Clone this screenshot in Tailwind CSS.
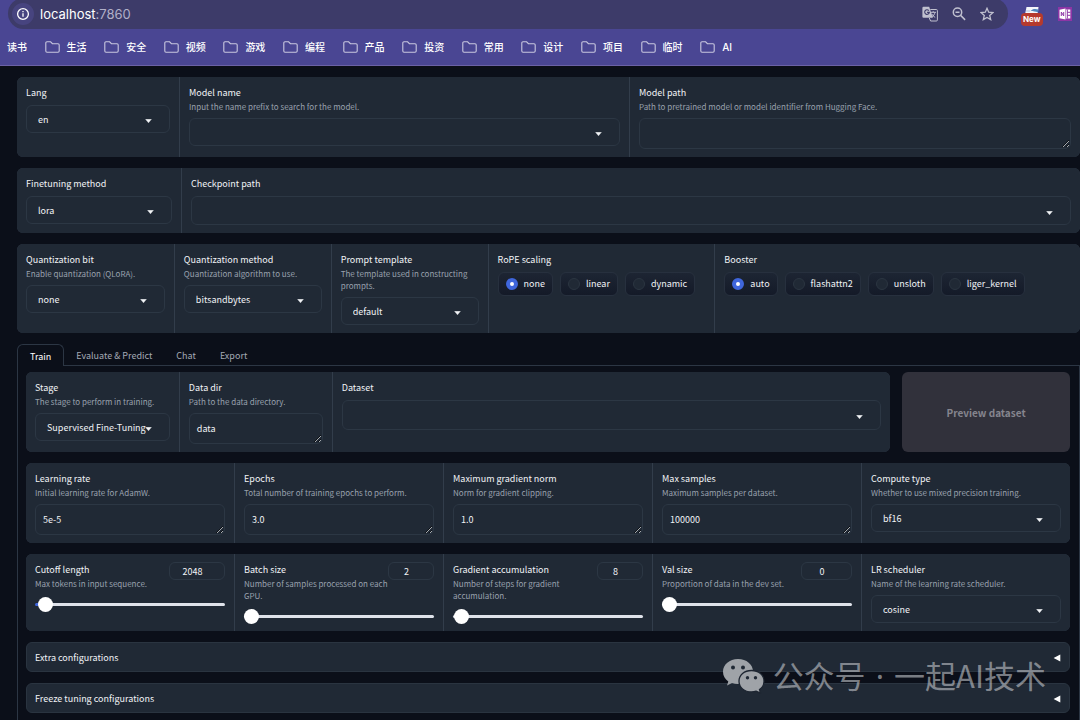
<!DOCTYPE html>
<html lang="en">
<head>
<meta charset="utf-8">
<meta name="viewport" content="width=device-width, initial-scale=1">
<title>LLaMA Board</title>
<script src="https://cdn.jsdelivr.net/npm/@tailwindcss/browser@4"></script>
</head>
<body class="relative h-screen overflow-hidden bg-[#0b0f19] font-['Noto_Sans_CJK_SC','Noto_Sans',sans-serif] text-[9px] text-[#f1f3f6] scheme-dark">

<!-- Icon shapes -->
<svg class="hidden" aria-hidden="true">
  <symbol id="folder" viewBox="0 0 15 12"><path d="M2 .8h3.6l1.8 1.9H13a1.2 1.2 0 0 1 1.2 1.2V10A1.2 1.2 0 0 1 13 11.200H2A1.200 1.200 0 0 1 .8 10V2A1.200 1.200 0 0 1 2 .8Z" fill="none" stroke="currentColor" stroke-width="1.100"/></symbol>
  <symbol id="caret" viewBox="0 0 7 4"><path d="M.6.3h5.800L3.500 3.800Z" fill="currentColor" stroke="currentColor" stroke-width=".4" stroke-linejoin="round"/></symbol>
  <symbol id="closed" viewBox="0 0 8 8"><path d="M7.300.6v6.800L.6 4Z" fill="currentColor"/></symbol>
</svg>

<header class="flex h-[66px] flex-col border-b border-[#6c62a6] bg-[#4a4693] font-['Inter','Noto_Sans_CJK_SC',sans-serif]">
  <div class="flex h-[29px] items-start">
    <div class="-mt-0.5 ml-2 flex h-[31px] w-[1000px] items-center rounded-full bg-[#3d3b69] pr-3.5 pl-1">
      <button class="flex size-[22px] items-center justify-center rounded-full bg-[#47447f] text-white" aria-label="Site information">
        <svg class="size-3.5" viewBox="0 0 14 14" fill="none" stroke="currentColor" stroke-width="1.300"><circle cx="7" cy="7" r="5.400"/><path d="M7 6.300v3.500M7 4v1.300"/></svg>
      </button>
      <a href="#" class="ml-1.5 flex-1 text-[13px] leading-4 text-[#b1b0c8]"><span class="text-white">localhost</span>:7860</a>
      <div class="flex items-center gap-[13px] text-[#c0c0cf]">
        <button aria-label="Translate"><svg class="h-4 w-4" viewBox="0 0 16 16"><path d="M1.500.800h5.700l3.600 11H1.500A1.100 1.100 0 0 1 .4 10.700V1.900A1.100 1.100 0 0 1 1.500.8Z" fill="currentColor"/><path d="M8.300 3.500h6A1.100 1.100 0 0 1 15.400 4.600v9.300a1.100 1.100 0 0 1-1.100 1.100H8.600L7.300 12M8.800 6.300H14M11.200 5.200v1.100M13 6.300c-.4 2-1.700 3.800-3.200 5M9.700 7.900c.8 1.600 2 2.700 3.500 3.500" fill="none" stroke="currentColor"/><path d="M6.800 4.600A2.300 2.300 0 1 0 7.300 6.400H5.100" fill="none" stroke="#3d3b69" stroke-width="1.100"/></svg></button>
        <button aria-label="Zoom out"><svg class="size-4" viewBox="0 0 16 16" fill="none" stroke="currentColor" stroke-width="1.500"><circle cx="6.500" cy="6.300" r="4.200"/><path d="m9.600 9.400 4.500 4.500M4.500 6.300h4"/></svg></button>
        <button aria-label="Bookmark"><svg class="size-[14px]" viewBox="0 0 14 14" fill="none" stroke="currentColor" stroke-width="1.300"><path d="m7 1.300 1.700 3.900 4.200.4-3.200 2.800 1 4.200L7 10.400l-3.700 2.200 1-4.200L1.100 5.600l4.200-.4Z"/></svg></button>
      </div>
    </div>
    <div class="ml-[13px] flex items-start gap-[15px] pt-[7px]">
      <button class="flex flex-col items-center" aria-label="New extension">
        <svg class="h-1.5 w-3.5" viewBox="0 0 14 6"><path d="M1.500 0h12l-.7 6H.3Z" fill="#f4f6fa"/><path d="M5.500 4c2-2.500 5-2.500 8-1.500l-.5 3c-2-1.500-5-.5-7.500-1.500Z" fill="#4f86bd"/><path d="M1 3.500h4v1H1Z" fill="#a9bfe0"/></svg>
        <span class="rounded-sm bg-[#b53a2e] px-0.5 text-[8px] leading-[13px] font-bold text-white">New</span>
      </button>
      <button aria-label="Notes clipper"><svg class="size-3.5" viewBox="0 0 14 14"><path d="M0 0h14v14H0Z" fill="#8d35a5"/><path d="m1.500 2.800 6-1.300v11l-6-1.300ZM8 2.500h4.300v9H8Z" fill="#fff"/><path d="M3.300 9V5l2.400 4V5M9.300 2.500v9M9.300 5.300h3M9.300 8.300h3" fill="none" stroke="#8d35a5"/></svg></button>
    </div>
  </div>
  <nav aria-label="Bookmarks" class="flex w-[732px] flex-1 items-center justify-between pl-[7px] text-[10px] font-medium text-white [&_a]:flex [&_a]:items-center [&_a]:gap-[7px] [&_svg]:h-3 [&_svg]:w-[15px] [&_svg]:text-[#c9c8df]">
    <a href="#">读书</a>
    <a href="#"><svg><use href="#folder"/></svg>生活</a>
    <a href="#"><svg><use href="#folder"/></svg>安全</a>
    <a href="#"><svg><use href="#folder"/></svg>视频</a>
    <a href="#"><svg><use href="#folder"/></svg>游戏</a>
    <a href="#"><svg><use href="#folder"/></svg>编程</a>
    <a href="#"><svg><use href="#folder"/></svg>产品</a>
    <a href="#"><svg><use href="#folder"/></svg>投资</a>
    <a href="#"><svg><use href="#folder"/></svg>常用</a>
    <a href="#"><svg><use href="#folder"/></svg>设计</a>
    <a href="#"><svg><use href="#folder"/></svg>项目</a>
    <a href="#"><svg><use href="#folder"/></svg>临时</a>
    <a href="#"><svg><use href="#folder"/></svg>AI</a>
  </nav>
</header>

<main class="flex flex-col gap-[11px] pt-[11px] pl-[17px]
  [&_.row]:grid [&_.row]:gap-px [&_.row]:overflow-hidden [&_.row]:rounded-md [&_.row]:bg-[#323d4b]
  [&_.cell]:bg-[#202935] [&_.cell]:px-[9px] [&_.cell]:py-2
  [&_.name]:block [&_.name]:pt-0.5 [&_.name]:leading-3
  [&_.info]:mt-0.5 [&_.info]:text-[8px] [&_.info]:leading-3 [&_.info]:text-[#99a1ae]
  [&_.pick]:relative [&_.pick]:mt-[5px] [&_.name+.pick]:mt-1.5
  [&_.pick>select]:block [&_.pick>select]:h-7 [&_.pick>select]:w-full [&_.pick>select]:appearance-none [&_.pick>select]:rounded-md [&_.pick>select]:border [&_.pick>select]:border-[#2c3744] [&_.pick>select]:bg-[#202935] [&_.pick>select]:pt-0.5 [&_.pick>select]:pl-[11px]
  [&_.pick>svg]:pointer-events-none [&_.pick>svg]:absolute [&_.pick>svg]:top-1/2 [&_.pick>svg]:right-[18px] [&_.pick>svg]:h-1 [&_.pick>svg]:w-[7px]
  [&_textarea]:mt-[5px] [&_textarea]:block [&_textarea]:h-[31px] [&_textarea]:w-full [&_textarea]:overflow-hidden [&_textarea]:rounded-md [&_textarea]:border [&_textarea]:border-[#2c3744] [&_textarea]:px-[7px] [&_textarea]:pt-2 [&_textarea]:leading-[14px]">

  <section class="row grid-cols-[162fr_449fr_450fr]">
    <div class="cell">
      <label class="name" for="lang">Lang</label>
      <div class="pick"><select id="lang"><option>en</option></select><svg><use href="#caret"/></svg></div>
    </div>
    <div class="cell">
      <label class="name" for="model">Model name</label>
      <p class="info">Input the name prefix to search for the model.</p>
      <div class="pick"><select id="model"><option></option></select><svg><use href="#caret"/></svg></div>
    </div>
    <div class="cell">
      <label class="name" for="path">Model path</label>
      <p class="info">Path to pretrained model or model identifier from Hugging Face.</p>
      <textarea id="path" rows="1"></textarea>
    </div>
  </section>

  <section class="row grid-cols-[164fr_898fr]">
    <div class="cell">
      <label class="name" for="method">Finetuning method</label>
      <div class="pick"><select id="method"><option>lora</option></select><svg><use href="#caret"/></svg></div>
    </div>
    <div class="cell">
      <label class="name" for="ckpt">Checkpoint path</label>
      <div class="pick"><select id="ckpt" class="min-h-[29px]"><option></option></select><svg><use href="#caret"/></svg></div>
    </div>
  </section>

  <section class="row grid-cols-[157fr_156fr_156fr_226fr_365fr] [&_.pills]:flex [&_.pills]:gap-[7px] [&_.pills]:pt-1.5
    [&_.pills>label]:flex [&_.pills>label]:h-6 [&_.pills>label]:items-center [&_.pills>label]:gap-1.5 [&_.pills>label]:rounded-md [&_.pills>label]:border [&_.pills>label]:border-[#27303e] [&_.pills>label]:bg-linear-to-b [&_.pills>label]:from-[#1d2533] [&_.pills>label]:to-[#141a28] [&_.pills>label]:px-[7px]
    [&_input]:size-3 [&_input]:appearance-none [&_input]:rounded-full [&_input]:border [&_input]:border-[#2b3541] [&_input]:bg-[#202935] [&_input:checked]:border-4 [&_input:checked]:border-[#3f66dc] [&_input:checked]:bg-white">
    <div class="cell">
      <label class="name" for="qbit">Quantization bit</label>
      <p class="info">Enable quantization (QLoRA).</p>
      <div class="pick"><select id="qbit"><option>none</option></select><svg><use href="#caret"/></svg></div>
    </div>
    <div class="cell">
      <label class="name" for="qmethod">Quantization method</label>
      <p class="info">Quantization algorithm to use.</p>
      <div class="pick"><select id="qmethod"><option>bitsandbytes</option></select><svg><use href="#caret"/></svg></div>
    </div>
    <div class="cell">
      <label class="name" for="template">Prompt template</label>
      <p class="info">The template used in constructing prompts.</p>
      <div class="pick"><select id="template"><option>default</option></select><svg><use href="#caret"/></svg></div>
    </div>
    <fieldset class="cell min-w-0">
      <legend class="name float-left w-full">RoPE scaling</legend>
      <div class="pills clear-both">
        <label><input type="radio" name="rope" checked>none</label>
        <label><input type="radio" name="rope">linear</label>
        <label><input type="radio" name="rope">dynamic</label>
      </div>
    </fieldset>
    <fieldset class="cell min-w-0">
      <legend class="name float-left w-full">Booster</legend>
      <div class="pills clear-both">
        <label><input type="radio" name="booster" checked>auto</label>
        <label><input type="radio" name="booster">flashattn2</label>
        <label><input type="radio" name="booster">unsloth</label>
        <label><input type="radio" name="booster">liger_kernel</label>
      </div>
    </fieldset>
  </section>

  <div>
    <div role="tablist" class="relative z-10 -mb-px flex h-[22px] text-[#a3a9b4] [&>button]:px-3 [&>button]:pt-0.5">
      <button role="tab" aria-selected="true" class="rounded-t-md border border-b-0 border-[#2c3644] bg-[#0b0f19] text-white">Train</button>
      <button role="tab">Evaluate &amp; Predict</button>
      <button role="tab">Chat</button>
      <button role="tab">Export</button>
    </div>

    <div role="tabpanel" class="flex flex-col gap-[11px] border border-[#2c3644] pt-1.5 pr-[9px] pb-10 pl-2">
      <div class="grid grid-cols-[865fr_168fr] gap-3">
        <section class="row grid-cols-[153fr_152fr_558fr]">
          <div class="cell">
            <label class="name" for="stage">Stage</label>
            <p class="info">The stage to perform in training.</p>
            <div class="pick"><select id="stage"><option>Supervised Fine-Tuning</option></select><svg><use href="#caret"/></svg></div>
          </div>
          <div class="cell">
            <label class="name" for="dir">Data dir</label>
            <p class="info">Path to the data directory.</p>
            <textarea id="dir" rows="1">data</textarea>
          </div>
          <div class="cell">
            <label class="name" for="dataset">Dataset</label>
            <div class="pick"><select id="dataset" class="min-h-[30px]"><option></option></select><svg><use href="#caret"/></svg></div>
          </div>
        </section>
        <button disabled class="rounded-md bg-[#31313b] text-[10px] font-bold text-[#85858e]">Preview dataset</button>
      </div>

      <section class="row grid-cols-5">
        <div class="cell">
          <label class="name" for="lr">Learning rate</label>
          <p class="info">Initial learning rate for AdamW.</p>
          <textarea id="lr" rows="1">5e-5</textarea>
        </div>
        <div class="cell">
          <label class="name" for="epochs">Epochs</label>
          <p class="info">Total number of training epochs to perform.</p>
          <textarea id="epochs" rows="1">3.0</textarea>
        </div>
        <div class="cell">
          <label class="name" for="norm">Maximum gradient norm</label>
          <p class="info">Norm for gradient clipping.</p>
          <textarea id="norm" rows="1">1.0</textarea>
        </div>
        <div class="cell">
          <label class="name" for="samples">Max samples</label>
          <p class="info">Maximum samples per dataset.</p>
          <textarea id="samples" rows="1">100000</textarea>
        </div>
        <div class="cell">
          <label class="name" for="compute">Compute type</label>
          <p class="info">Whether to use mixed precision training.</p>
          <div class="pick"><select id="compute"><option>bf16</option></select><svg><use href="#caret"/></svg></div>
        </div>
      </section>

      <section class="row grid-cols-5 [&_.head]:flex [&_.head]:items-start [&_.head]:justify-between
        [&_[type=number]]:h-[18px] [&_[type=number]]:shrink-0 [&_[type=number]]:rounded-md [&_[type=number]]:border [&_[type=number]]:border-[#2c3744] [&_[type=number]]:pl-1.5 [&_[type=number]]:text-center
        [&_[type=range]]:mt-[7px] [&_[type=range]]:block [&_[type=range]]:h-3.5 [&_[type=range]]:w-full [&_[type=range]]:appearance-none [&_[type=range]]:bg-transparent
        [&_::-webkit-slider-runnable-track]:h-[3px] [&_::-webkit-slider-runnable-track]:rounded-full [&_::-webkit-slider-runnable-track]:bg-[#dfe2ea]
        [&_::-webkit-slider-thumb]:-mt-1.5 [&_::-webkit-slider-thumb]:size-[15px] [&_::-webkit-slider-thumb]:appearance-none [&_::-webkit-slider-thumb]:rounded-full [&_::-webkit-slider-thumb]:bg-white">
        <div class="cell">
          <div class="head">
            <div><label class="name" for="cutoff">Cutoff length</label><p class="info">Max tokens in input sequence.</p></div>
            <input type="number" class="w-14" value="2048" aria-label="Cutoff length value">
          </div>
          <input id="cutoff" type="range" min="4" max="131072" value="2048" class="[&::-webkit-slider-runnable-track]:bg-linear-to-r [&::-webkit-slider-runnable-track]:from-[#3f66dc] [&::-webkit-slider-runnable-track]:from-2% [&::-webkit-slider-runnable-track]:to-[#dfe2ea] [&::-webkit-slider-runnable-track]:to-2%">
        </div>
        <div class="cell">
          <div class="head">
            <div><label class="name" for="batch">Batch size</label><p class="info">Number of samples processed on each GPU.</p></div>
            <input type="number" class="w-[46px]" value="2" aria-label="Batch size value">
          </div>
          <input id="batch" type="range" min="1" max="1024" value="2">
        </div>
        <div class="cell">
          <div class="head">
            <div><label class="name" for="accum">Gradient accumulation</label><p class="info">Number of steps for gradient accumulation.</p></div>
            <input type="number" class="w-[46px]" value="8" aria-label="Gradient accumulation value">
          </div>
          <input id="accum" type="range" min="1" max="1024" value="8">
        </div>
        <div class="cell">
          <div class="head">
            <div><label class="name" for="val">Val size</label><p class="info">Proportion of data in the dev set.</p></div>
            <input type="number" class="w-[51px]" value="0" aria-label="Val size value">
          </div>
          <input id="val" type="range" min="0" max="1" step="0.001" value="0">
        </div>
        <div class="cell">
          <label class="name" for="sched">LR scheduler</label>
          <p class="info">Name of the learning rate scheduler.</p>
          <div class="pick"><select id="sched"><option>cosine</option></select><svg><use href="#caret"/></svg></div>
        </div>
      </section>

      <button aria-expanded="false" class="flex h-[30px] items-center justify-between rounded-md border border-[#2a3440] bg-[#202935] px-2 pt-px">Extra configurations<svg class="size-2 text-white"><use href="#closed"/></svg></button>
      <button aria-expanded="false" class="flex h-[30px] items-center justify-between rounded-md border border-[#2a3440] bg-[#202935] px-2 pt-px">Freeze tuning configurations<svg class="size-2 text-white"><use href="#closed"/></svg></button>
    </div>
  </div>
</main>

<!-- Account watermark over the page -->
<div class="pointer-events-none absolute right-[34px] bottom-6 z-20 flex items-center gap-2 text-[31px] leading-10 whitespace-nowrap text-[#c4c7cc]/60">
  <svg class="h-9 w-[43px]" viewBox="0 0 43 36">
    <path d="M16 1C7.500 1 1 6.600 1 13.700c0 4 2 7.500 5.300 9.800L5 27.600l5-2.500c1.900.6 3.900.9 6 .9 8.500 0 15-5.500 15-12.500S24.500 1 16 1Z" fill="#9fa3a8"/>
    <path d="M29.500 12.500C22.300 12.500 17 17 17 23.200s5.300 10.700 12.500 10.700c1.700 0 3.300-.2 4.700-.7l4.300 2-1-3.600c2.900-2 4.500-5 4.500-8.400 0-6.200-5.300-10.700-12.500-10.700Z" fill="#9fa3a8" stroke="#1d2531" stroke-width="1.300"/>
    <g fill="#202935"><circle cx="11" cy="9.500" r="2"/><circle cx="21" cy="9.500" r="2"/><circle cx="25.500" cy="19.700" r="1.700"/><circle cx="33.500" cy="19.700" r="1.700"/></g>
  </svg>
  <span>公众号<span class="mx-0.5 font-['Noto_Sans']"> · </span>一起AI技术</span>
</div>
</body>
</html>
